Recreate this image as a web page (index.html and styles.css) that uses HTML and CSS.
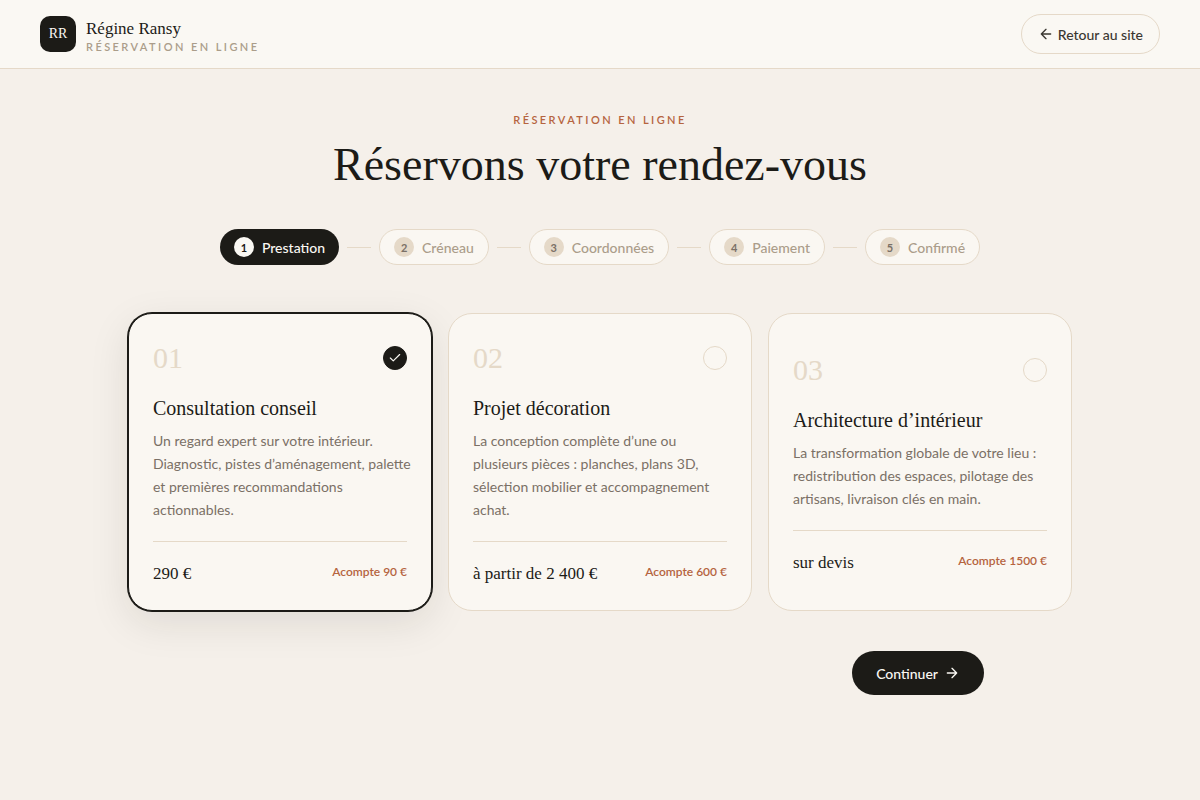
FILE: index.html
```
<!DOCTYPE html>
<html lang="fr">
<head>
    <meta charset="UTF-8">
    <meta name="viewport" content="width=device-width, initial-scale=1.0">
    <title>Régine Ransy - Réservation en ligne</title>
    <link rel="stylesheet" href="styles.css">
</head>
<body>
    <header class="header">
        <div class="brand">
            <span class="brand-logo">RR</span>
            <div class="brand-text">
                <span class="brand-name">Régine Ransy</span>
                <span class="brand-sub">Réservation en ligne</span>
            </div>
        </div>
        <a href="#" class="back">
            <svg width="16" height="16" viewBox="0 0 24 24" fill="none" stroke="currentColor" stroke-width="2" stroke-linecap="round" stroke-linejoin="round"><path d="M19 12H5M12 5l-7 7 7 7"/></svg>
            Retour au site
        </a>
    </header>

    <main class="main">
        <p class="eyebrow">Réservation en ligne</p>
        <h1 class="title">Réservons votre rendez-vous</h1>

        <ol class="steps">
            <li class="step active"><span class="step-num">1</span>Prestation</li>
            <li class="step-line" aria-hidden="true"></li>
            <li class="step"><span class="step-num">2</span>Créneau</li>
            <li class="step-line" aria-hidden="true"></li>
            <li class="step"><span class="step-num">3</span>Coordonnées</li>
            <li class="step-line" aria-hidden="true"></li>
            <li class="step"><span class="step-num">4</span>Paiement</li>
            <li class="step-line" aria-hidden="true"></li>
            <li class="step"><span class="step-num">5</span>Confirmé</li>
        </ol>

        <form>
            <div class="cards">
                <label class="card" for="conseil">
                    <span class="card-top">
                        <span class="card-num">01</span>
                        <span class="check">
                            <input type="radio" name="prestation" id="conseil" checked>
                            <svg width="14" height="14" viewBox="0 0 24 24" fill="none" stroke="currentColor" stroke-width="2" stroke-linecap="round" stroke-linejoin="round"><path d="M4 12l5 5L20 6"/></svg>
                        </span>
                    </span>
                    <span class="card-title">Consultation conseil</span>
                    <span class="card-desc">Un regard expert sur votre intérieur. Diagnostic, pistes d’aménagement, palette et premières recommandations actionnables.</span>
                    <span class="card-foot">
                        <span class="price">290 €</span>
                        <span class="deposit">Acompte 90 €</span>
                    </span>
                </label>

                <label class="card" for="decoration">
                    <span class="card-top">
                        <span class="card-num">02</span>
                        <span class="check">
                            <input type="radio" name="prestation" id="decoration">
                            <svg width="14" height="14" viewBox="0 0 24 24" fill="none" stroke="currentColor" stroke-width="2" stroke-linecap="round" stroke-linejoin="round"><path d="M4 12l5 5L20 6"/></svg>
                        </span>
                    </span>
                    <span class="card-title">Projet décoration</span>
                    <span class="card-desc">La conception complète d’une ou plusieurs pièces : planches, plans 3D, sélection mobilier et accompagnement achat.</span>
                    <span class="card-foot">
                        <span class="price">à partir de 2 400 €</span>
                        <span class="deposit">Acompte 600 €</span>
                    </span>
                </label>

                <label class="card" for="architecture">
                    <span class="card-top">
                        <span class="card-num">03</span>
                        <span class="check">
                            <input type="radio" name="prestation" id="architecture">
                            <svg width="14" height="14" viewBox="0 0 24 24" fill="none" stroke="currentColor" stroke-width="2" stroke-linecap="round" stroke-linejoin="round"><path d="M4 12l5 5L20 6"/></svg>
                        </span>
                    </span>
                    <span class="card-title">Architecture d’intérieur</span>
                    <span class="card-desc">La transformation globale de votre lieu : redistribution des espaces, pilotage des artisans, livraison clés en main.</span>
                    <span class="card-foot">
                        <span class="price">sur devis</span>
                        <span class="deposit">Acompte 1500 €</span>
                    </span>
                </label>
            </div>

            <div class="actions">
                <button type="button" class="continue">
                    Continuer
                    <svg width="16" height="16" viewBox="0 0 24 24" fill="none" stroke="currentColor" stroke-width="2" stroke-linecap="round" stroke-linejoin="round"><path d="M5 12h14M12 5l7 7-7 7"/></svg>
                </button>
            </div>
        </form>
    </main>
</body>
</html>
```
FILE: styles.css
```
:root {
    --ink: #1c1b17;
    --ivory: #faf8f3;
    --card: #faf7f2;
    --cream: #f5f0ea;
    --sand: #e5d9c8;
    --taupe: #ab9d8a;
    --stone: #7a7066;
    --terra: #b5643f;
    --serif: "Liberation Serif", serif;
    --sans: Lato, sans-serif;
}

* {
    box-sizing: border-box;
}

body {
    margin: 0;
    min-height: 100vh;
    background-color: var(--cream);
    color: var(--ink);
    font-family: var(--sans);
    font-size: 14px;
}

/* header */
.header {
    display: flex;
    justify-content: space-between;
    align-items: center;
    padding: 14px 40px;
    background-color: var(--ivory);
    border-bottom: 1px solid var(--sand);
}

.brand {
    display: flex;
    align-items: center;
    gap: 10px;
}

.brand-logo {
    display: flex;
    align-items: center;
    justify-content: center;
    width: 36px;
    height: 36px;
    border-radius: 10px;
    background-color: var(--ink);
    color: var(--ivory);
    font-family: var(--serif);
    font-size: 14px;
}

.brand-text {
    display: flex;
    flex-direction: column;
    padding-top: 4px;
}

.brand-name {
    font-family: var(--serif);
    font-size: 17px;
    line-height: 22px;
}

.brand-sub,
.eyebrow {
    font-size: 11px;
    line-height: 14px;
    font-weight: 600;
    letter-spacing: 0.22em;
    text-transform: uppercase;
}

.brand-sub {
    color: var(--taupe);
}

.back {
    display: flex;
    align-items: center;
    gap: 4px;
    height: 40px;
    padding: 0 16px;
    border: 1px solid var(--sand);
    border-radius: 20px;
    color: #3a3731;
    font-weight: 500;
    text-decoration: none;
}

/* page */
.main {
    max-width: 1024px;
    margin: 0 auto;
    padding: 44px 40px;
}

.eyebrow {
    margin: 0;
    color: var(--terra);
    text-align: center;
}

.title {
    margin: 10px 0 36px;
    font-family: var(--serif);
    font-size: 46px;
    line-height: 56px;
    font-weight: 400;
    text-align: center;
}

.steps {
    display: flex;
    justify-content: center;
    align-items: center;
    gap: 8px;
    margin: 0 0 48px;
    padding: 0;
    list-style: none;
}

.step {
    display: flex;
    align-items: center;
    gap: 8px;
    height: 36px;
    padding: 0 14px;
    border: 1px solid var(--sand);
    border-radius: 18px;
    background-color: var(--card);
    color: var(--taupe);
    font-weight: 500;
}

.step.active {
    border: none;
    background-color: var(--ink);
    color: var(--ivory);
}

.step-num {
    display: flex;
    align-items: center;
    justify-content: center;
    width: 20px;
    height: 20px;
    border-radius: 50%;
    background-color: var(--sand);
    color: var(--stone);
    font-size: 11px;
    font-weight: 700;
}

.step.active .step-num {
    background-color: var(--ivory);
    color: var(--ink);
}

.step-line {
    width: 24px;
    height: 1px;
    background-color: var(--sand);
}

/* cards */
.cards {
    display: grid;
    grid-template-columns: repeat(3, 1fr);
    gap: 16px;
}

.card {
    display: flex;
    flex-direction: column;
    justify-content: center;
    padding: 24px;
    border: 1px solid var(--sand);
    border-radius: 24px;
    background-color: var(--card);
    cursor: pointer;
}

.card:has(input:checked) {
    border-color: var(--ink);
    box-shadow: 0 0 0 1px var(--ink), 0 12px 40px rgba(28, 27, 23, 0.1);
}

.card-top {
    display: flex;
    justify-content: space-between;
    align-items: center;
    height: 40px;
    margin-bottom: 16px;
}

.card-num {
    color: var(--sand);
    font-family: var(--serif);
    font-size: 30px;
}

.check {
    display: grid;
    place-items: center;
    color: var(--ivory);
}

.check input,
.check svg {
    grid-area: 1 / 1;
}

.check input {
    appearance: none;
    width: 24px;
    height: 24px;
    margin: 0;
    border: 1px solid var(--sand);
    border-radius: 50%;
    cursor: pointer;
}

.check input:checked {
    border-color: var(--ink);
    background-color: var(--ink);
}

.check svg {
    visibility: hidden;
    pointer-events: none;
}

.check input:checked + svg {
    visibility: visible;
}

.card-title {
    margin-bottom: 7px;
    font-family: var(--serif);
    font-size: 20px;
    line-height: 28px;
}

/* long lines may run a little into the card padding */
.card-desc {
    margin: 0 -6px 20px 0;
    color: var(--stone);
    line-height: 23px;
}

.card-foot {
    display: flex;
    justify-content: space-between;
    align-items: flex-start;
    padding-top: 20px;
    border-top: 1px solid var(--sand);
}

.price {
    font-family: var(--serif);
    font-size: 17px;
    line-height: 24px;
}

.deposit {
    color: var(--terra);
    font-size: 12px;
    line-height: 20px;
    font-weight: 600;
}

.actions {
    display: flex;
    justify-content: flex-end;
    max-width: 768px;
    margin: 40px auto 0;
}

.continue {
    display: flex;
    align-items: center;
    gap: 6px;
    height: 44px;
    padding: 0 24px;
    border: none;
    border-radius: 22px;
    background-color: var(--ink);
    color: var(--ivory);
    font-family: var(--sans);
    font-size: 14px;
    font-weight: 500;
    cursor: pointer;
}
```
